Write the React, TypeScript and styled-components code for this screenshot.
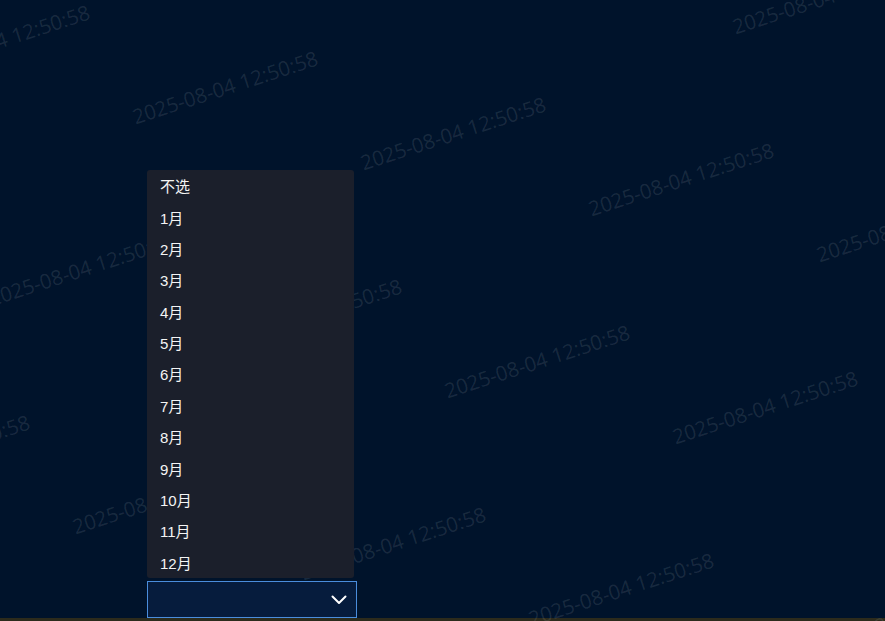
import React from "react";
import styled, { createGlobalStyle } from "styled-components";

const GlobalStyle = createGlobalStyle`
  html, body {
    margin: 0;
    padding: 0;
    background: #00132b;
    overflow: hidden;
  }
  #root {
    height: 100vh;
  }
`;

const Page = styled.div`
  position: relative;
  width: 100%;
  height: 100%;
  display: flex;
  flex-direction: column;
  justify-content: flex-end;
  background: #00132b;
  overflow: hidden;
  font-family: "Liberation Sans", "Noto Sans CJK SC", sans-serif;
`;

const WatermarkLayer = styled.div`
  position: absolute;
  inset: 0;
  pointer-events: none;
`;

const Watermark = styled.span`
  position: absolute;
  transform: translate(-50%, -50%) rotate(-18deg);
  white-space: nowrap;
  font-family: "Open Sans", "DejaVu Sans", sans-serif;
  font-size: 20.5px;
  color: rgba(255, 255, 255, 0.1);
  user-select: none;
`;

const FieldRow = styled.div`
  position: relative;
  z-index: 1;
  padding-left: 147px;
`;

const SelectWrap = styled.div`
  position: relative;
  width: 210px;
`;

const Menu = styled.ul`
  position: absolute;
  left: 0;
  bottom: calc(100% + 3px);
  width: 207px;
  margin: 0;
  padding: 0;
  list-style: none;
  background: #1b1f2b;
  border-radius: 3px;
`;

const MenuItem = styled.li`
  height: 31.4px;
  display: flex;
  align-items: center;
  padding: 0 13px;
  font-size: 15px;
  color: #f4f4f4;
  cursor: pointer;
`;

const SelectBox = styled.div`
  box-sizing: border-box;
  height: 37px;
  display: flex;
  align-items: center;
  justify-content: flex-end;
  padding-right: 9px;
  border: 1px solid #4a8ddc;
  background: #061c3d;
  cursor: pointer;
`;

const BottomStrip = styled.div`
  height: 3px;
  background: #2c2b1c;
`;

const Chevron = () => (
  <svg width="16" height="10" viewBox="0 0 16 10" fill="none">
    <polyline
      points="1.5,1.5 8,8 14.5,1.5"
      stroke="#ffffff"
      strokeWidth="2"
      strokeLinecap="round"
      strokeLinejoin="round"
    />
  </svg>
);

const stamp = "2025-08-04 12:50:58";
const months = ["不选", ...Array.from({ length: 12 }, (_, i) => `${i + 1}月`)];

const marks: { x: number; y: number }[] = [];
for (let i = -5; i <= 5; i++) {
  for (let j = -2; j <= 3; j++) {
    const x = 453 + 228 * i + 84 * j;
    const y = 133 + 46 * i + 228 * j;
    if (x > -150 && x < 1040 && y > -80 && y < 700) marks.push({ x, y });
  }
}

const App = () => {
  return (
    <Page>
      <GlobalStyle />
      <WatermarkLayer>
        {marks.map((m, idx) => (
          <Watermark key={idx} style={{ left: m.x, top: m.y }}>
            {stamp}
          </Watermark>
        ))}
      </WatermarkLayer>
      <FieldRow>
        <SelectWrap>
          <Menu>
            {months.map((m) => (
              <MenuItem key={m}>{m}</MenuItem>
            ))}
          </Menu>
          <SelectBox>
            <Chevron />
          </SelectBox>
        </SelectWrap>
      </FieldRow>
      <BottomStrip />
    </Page>
  );
};

export default App;
